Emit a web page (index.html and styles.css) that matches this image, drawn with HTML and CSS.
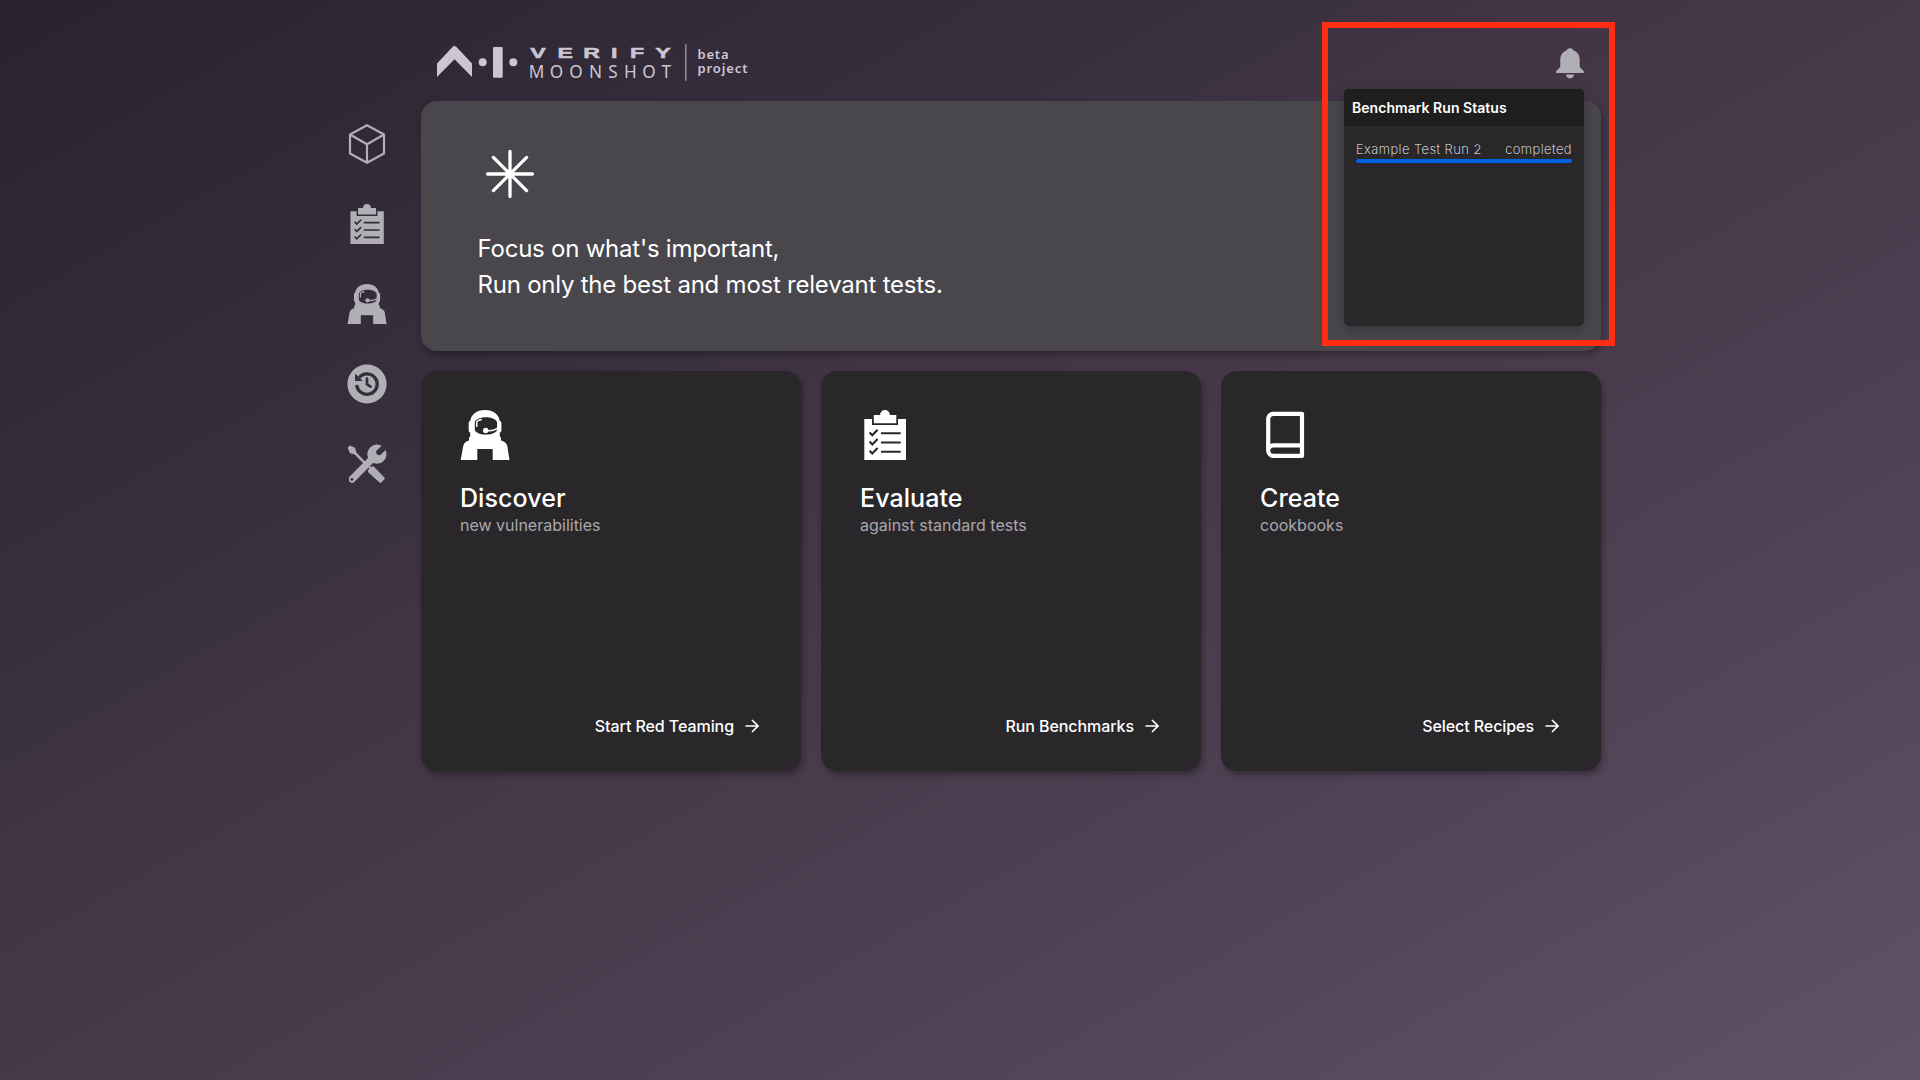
FILE: index.html
```html
<!DOCTYPE html>
<html lang="en">
<head>
<meta charset="utf-8">
<title>AI Verify Moonshot</title>
<link rel="stylesheet" href="styles.css">
</head>
<body>
<svg class="sprite" aria-hidden="true">
  <defs>
    <mask id="astro-cut">
      <rect width="50" height="50" fill="#fff"/>
      <path d="M25.800 7.200c6.500 0 11.300 2.500 11.300 5.500v6.500c0 3.200-5 5.300-11.300 5.300s-11-2.100-11-5.300v-6.500c0-3 4.700-5.500 11-5.500z" fill="#000"/>
      <path d="M17.300 39h15.400v12H17.300z" fill="#000"/>
      <path d="M16.800 17v-4.500c0-1.500 2.500-2.600 5-3M27 20.600c5 .4 9-.8 11-3" fill="none" stroke="#fff" stroke-width="1.500"/>
      <circle cx="25.700" cy="20.400" r="2.700" fill="#fff"/>
    </mask>
    <symbol id="astronaut" viewBox="0 0 50 50">
      <path mask="url(#astro-cut)" d="M25 0c8.500 0 13.800 4.500 14.800 11 1 .3 1.600 1 1.600 2v7.500c0 1-.6 1.800-1.600 2.100v3.800l1.200 1v3c3 .7 5.300 2.300 6.200 5L49.500 50H.7l2.600-14.600c.9-2.700 2.700-4.300 5.700-5v-3l1.200-1v-3.800c-1-.3-1.500-1.100-1.500-2.100V13c0-1 .5-1.700 1.500-2C11.200 4.500 16.500 0 25 0z"/>
    </symbol>
    <mask id="board-cut">
      <rect width="50" height="50" fill="#fff"/>
      <path d="M12 8h26v7H12z" fill="#000"/>
      <path d="M21 23.300h19.700M21 32.500h19.700M21 41.700h19.700M9.600 22.400l2.700 2.800 5.300-5.500M9.600 31.600l2.700 2.800 5.300-5.500M9.600 40.800l2.700 2.800 5.300-5.500" fill="none" stroke="#000" stroke-width="2.100"/>
    </mask>
    <symbol id="clipboard" viewBox="0 0 50 50">
      <path mask="url(#board-cut)" d="M4.300 9H46v41H4.300z"/>
      <path d="M13.800 5h6.300a4.900 4.900 0 0 1 9.800 0h6.400v8.200H13.800z"/>
    </symbol>
    <mask id="history-cut">
      <rect width="40" height="40" fill="#fff"/>
      <path d="M9.800 20.800a10.200 10.200 0 1 0 2.300-7.200" fill="none" stroke="#000" stroke-width="3.400"/>
      <path d="M8 9.500v7.500h7.700z" fill="#000"/>
      <path d="M20 14.500v5.800l3.600 2.300" fill="none" stroke="#000" stroke-width="2.700" stroke-linecap="round"/>
    </mask>
    <mask id="tools-cut">
      <rect width="40" height="40" fill="#fff"/>
      <path d="M37.500-1l-8.500 8.300.8 3.200 3.200.8L42 3z" fill="#000"/>
      <circle cx="4.900" cy="35.400" r="1.400" fill="#000"/>
    </mask>
  </defs>
</svg>

<div class="page">
  <nav class="sidebar">
    <svg class="nav-icon" viewBox="0 0 40 40"><path d="M20 1.200l17 9.300v19L20 38.800 3 29.500v-19zM3 10.500l17 9.700 17-9.700M20 20.200v18.600" fill="none" stroke="currentColor" stroke-width="2.200" stroke-linejoin="round"/></svg>
    <svg class="nav-icon"><use href="#clipboard"/></svg>
    <svg class="nav-icon"><use href="#astronaut"/></svg>
    <svg class="nav-icon" viewBox="0 0 40 40"><circle cx="20" cy="20" r="19.600" mask="url(#history-cut)"/></svg>
    <svg class="nav-icon" viewBox="0 0 40 40">
      <path d="M.6 3.800L3 1.400l5 2.400 1.300 4.700L21.500 21l-1.700 1.700L7.400 10.300 3 9.200z"/>
      <path d="M20.800 26.500l1.600-1.500-1-1.500 1.700-1.600 1.600 1 1.500-.9L37.400 33.600c.6.700.4 1.200 0 1.700l-3.200 3.200c-.6.600-1.200.5-1.700 0L21.200 28.300z"/>
      <g mask="url(#tools-cut)"><circle cx="29.900" cy="10.200" r="9.600"/><path d="M26 14L5 35.300" fill="none" stroke="currentColor" stroke-width="7" stroke-linecap="round"/></g>
    </svg>
  </nav>

  <main class="main">
    <header class="topbar">
      <svg class="logo" viewBox="0 0 320 40" role="img" aria-label="AI Verify Moonshot">
        <path d="M0 21.500L16 4.500q1.500-1 3 0L35 21.500V35L17.500 17.300 0 35z"/>
        <circle cx="45.700" cy="20.300" r="4"/>
        <rect x="56" y="5" width="9.700" height="30.700" rx="1"/>
        <circle cx="76.300" cy="20.300" r="4"/>
        <text class="logo-verify" transform="translate(93 16.300) scale(1.500 1)" x="0.200 18.400 35.500 54 66.700 83.500" y="0">VERIFY</text>
        <text class="logo-moonshot" x="91.800 112.700 132.300 152 171.200 187 205.200 224.500" y="35.800">MOONSHOT</text>
        <rect class="logo-line" x="248" y="2.300" width="1.600" height="36.500"/>
        <text class="logo-beta" x="260.500" y="16.600" textLength="31">beta</text>
        <text class="logo-beta" x="260.500" y="31" textLength="50">project</text>
      </svg>
      <svg class="bell" viewBox="0 0 28 31"><path d="M14 .2c1.800 0 3 .9 3.300 2.300 4 1.300 6.400 4.700 6.400 9V19l3.900 4c.7.900.3 2-.9 2H1.300C.1 25-.3 23.900.4 23l3.900-4v-7.500c0-4.300 2.400-7.700 6.400-9C11 1.100 12.200.2 14 .2zM9.900 26.500h8.200c-.2 2.300-1.900 3.900-4.100 3.900s-3.900-1.600-4.100-3.900z"/></svg>
    </header>

    <section class="banner">
      <svg class="star" viewBox="0 0 50 50"><path d="M25 2.500v45M2.500 25h45M8.400 8.400l33.200 33.200M41.600 8.400L8.400 41.600"/></svg>
      <p class="banner-text">Focus on what's important,<br>Run only the best and most relevant tests.</p>
    </section>

    <section class="cards">
      <article class="card">
        <svg class="card-icon"><use href="#astronaut"/></svg>
        <h2 class="card-title">Discover</h2>
        <p class="card-sub">new vulnerabilities</p>
        <a class="card-link">Start Red Teaming <svg class="arrow" viewBox="0 0 14 14"><path d="M.5 7h12M7 1l6 6-6 6"/></svg></a>
      </article>
      <article class="card">
        <svg class="card-icon"><use href="#clipboard"/></svg>
        <h2 class="card-title">Evaluate</h2>
        <p class="card-sub">against standard tests</p>
        <a class="card-link">Run Benchmarks <svg class="arrow" viewBox="0 0 14 14"><path d="M.5 7h12M7 1l6 6-6 6"/></svg></a>
      </article>
      <article class="card">
        <svg class="card-icon" viewBox="0 0 50 50"><path d="M42 3.800H13.500a5.300 5.300 0 0 0-5.300 5.300v31.500a5.300 5.300 0 0 0 5.300 5.300H42zM8.200 40.600a5.300 5.300 0 0 1 5.300-5.300H42" fill="none" stroke="currentColor" stroke-width="4.200" stroke-linejoin="round"/></svg>
        <h2 class="card-title">Create</h2>
        <p class="card-sub">cookbooks</p>
        <a class="card-link">Select Recipes <svg class="arrow" viewBox="0 0 14 14"><path d="M.5 7h12M7 1l6 6-6 6"/></svg></a>
      </article>
    </section>
  </main>

  <aside class="popup">
    <h3 class="popup-head">Benchmark Run Status</h3>
    <div class="popup-body">
      <div class="run"><span>Example Test Run 2</span><span>completed</span></div>
      <div class="progress"></div>
    </div>
  </aside>
  <div class="highlight"></div>
</div>
</body>
</html>
```
FILE: styles.css
```css
* { box-sizing: border-box; }
body {
  margin: 0;
  font-family: Inter, "Liberation Sans", sans-serif;
  color: #fff;
}
svg { display: block; fill: currentColor; }
.sprite { position: absolute; width: 0; height: 0; }
.page {
  position: relative;
  display: flex;
  gap: 34px;
  width: 1920px;
  height: 1080px;
  padding-left: 347px;
  overflow: hidden;
  background: linear-gradient(to bottom right, #2a222e 0%, #393140 34%, #413343 39%, #4d3f51 66%, #5f5168 100%);
}
.sidebar {
  display: flex;
  flex-direction: column;
  gap: 40px;
  padding-top: 124px;
  color: #b1afb6;
}
.nav-icon { width: 40px; height: 40px; }
.main { width: 1180px; }
.topbar {
  display: flex;
  justify-content: space-between;
  height: 101px;
  padding: 42px 17px 0 16px;
}
.logo { width: 320px; height: 40px; color: #cbc6d2; }
.logo-verify {
  font: bold 15.5px "Liberation Sans", sans-serif;
  stroke: currentColor;
  stroke-width: 0.5;
}
.logo-moonshot { font: 400 17.2px "Noto Sans", sans-serif; }
.logo-line { fill: #8e8895; }
.logo-beta { font: 600 13px "Noto Sans", sans-serif; }
.bell { width: 28px; height: 31px; margin-top: 5.5px; color: #b1afb6; }
.banner {
  height: 250px;
  padding: 48px 57px 0 56.5px;
  border-radius: 16px;
  background: #49464c;
  box-shadow: 2px 4px 6px rgba(0, 0, 0, 0.3);
}
.star {
  width: 50px;
  height: 50px;
  margin-left: 7.5px;
  fill: none;
  stroke: #fff;
  stroke-width: 3.3;
  stroke-linecap: round;
}
.banner-text {
  margin: 32px 0 0;
  font-size: 24px;
  line-height: 36px;
  letter-spacing: -0.23px;
}
.cards {
  display: grid;
  grid-template-columns: repeat(3, 380px);
  gap: 20px;
  margin-top: 20px;
}
.card {
  display: flex;
  flex-direction: column;
  height: 400px;
  padding: 39px 42px 35px 39px;
  border-radius: 16px;
  background: #29272a;
  box-shadow: 2px 4px 6px rgba(0, 0, 0, 0.3);
}
.card-icon { width: 50px; height: 50px; }
.card-title {
  margin: 22px 0 0;
  font-size: 25px;
  font-weight: 500;
  line-height: 32px;
  letter-spacing: 0.08px;
}
.card-sub {
  margin: -1px 0 0;
  font-size: 16px;
  line-height: 24px;
  color: #a9a8ae;
}
.card-link {
  display: flex;
  align-items: center;
  gap: 11px;
  margin-top: auto;
  align-self: flex-end;
  font-size: 16px;
  font-weight: 500;
  line-height: 20px;
  letter-spacing: -0.07px;
}
.arrow { width: 14px; height: 14px; fill: none; stroke: #fff; stroke-width: 1.6; }
.popup {
  position: absolute;
  left: 1344px;
  top: 89px;
  width: 240px;
  height: 237px;
  border-radius: 5px;
  overflow: hidden;
  background: #29272a;
  box-shadow: 0 4px 12px rgba(0, 0, 0, 0.25);
}
.popup-head {
  margin: 0;
  padding-left: 8px;
  font-size: 14px;
  font-weight: 600;
  line-height: 37px;
  letter-spacing: 0.04px;
  background: #1e1e1e;
}
.popup-body { padding: 14px 12px; }
.run {
  display: flex;
  justify-content: space-between;
  margin-bottom: 1px;
  font-size: 13px;
  font-weight: 200;
  line-height: 18px;
  letter-spacing: 0.45px;
  color: #f4f4f6;
}
.progress { height: 4px; border-radius: 2px; background: #0063e0; }
.highlight {
  position: absolute;
  left: 1322px;
  top: 22px;
  width: 293px;
  height: 324px;
  border: 6px solid #ff2d12;
}
```
